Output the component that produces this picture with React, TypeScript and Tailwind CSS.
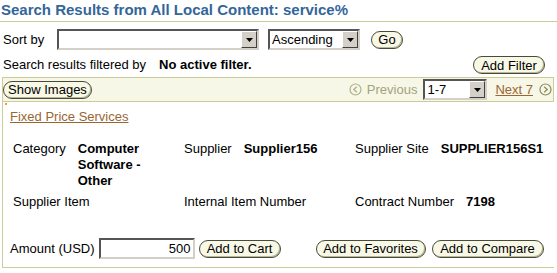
import React from "react";

function Btn({ children, className = "" }: { children: React.ReactNode; className?: string }) {
  return (
    <button
      className={`h-[18px] rounded-[9px] border border-[#4a4a3a] bg-[#f8f8e6] text-[13px] leading-none text-black shadow-[inset_-1px_-1px_0_#b8b898] flex items-center justify-center ${className}`}
    >
      {children}
    </button>
  );
}

function Select({ value = "", className = "" }: { value?: string; className?: string }) {
  return (
    <div
      className={`h-[21px] flex border-2 border-t-[#555555] border-l-[#555555] border-r-[#d4d0c8] border-b-[#d4d0c8] bg-white ${className}`}
    >
      <div className="flex-1 pl-[2px] leading-[17px] overflow-hidden whitespace-nowrap">{value}</div>
      <div className="w-[16px] h-[17px] bg-[#d4d0c8] border border-t-white border-l-white border-r-[#404040] border-b-[#404040] flex items-center justify-center">
        <svg width="7" height="4" viewBox="0 0 7 4">
          <path d="M0 0h7L3.5 4z" fill="#000" />
        </svg>
      </div>
    </div>
  );
}

function NavIcon({ dir, color }: { dir: "prev" | "next"; color: string }) {
  return (
    <svg width="13" height="13" viewBox="0 0 13 13">
      <circle cx="6.5" cy="6.5" r="5.5" fill="none" stroke={color} strokeWidth="1.2" />
      <path
        d={dir === "prev" ? "M7.8 3.8L4.8 6.5l3 2.7" : "M5.2 3.8l3 2.7-3 2.7"}
        fill="none"
        stroke={color}
        strokeWidth="1.3"
      />
    </svg>
  );
}

function Field({ label, value }: { label: string; value?: string }) {
  return (
    <div className="w-[171px] flex items-start">
      <span className="shrink-0">{label}</span>
      {value && <span className="ml-[12px] pr-[6px] font-bold">{value}</span>}
    </div>
  );
}

export default function App() {
  return (
    <div className="w-[557px] h-[273px] bg-white text-[13px] leading-[16px] text-black font-['Liberation_Sans',Arial,sans-serif]">
      <div className="h-[22px] border-b border-[#cccc99] pl-[1px] text-[15px] leading-[20px] font-bold text-[#336699]">
        Search Results from All Local Content: service%
      </div>

      <div className="mt-[7px] h-[21px] flex items-center pl-[3px]">
        <span className="w-[54px]">Sort by</span>
        <Select className="w-[202px]" />
        <Select className="w-[92px] ml-[9px]" value="Ascending" />
        <Btn className="ml-[11px] w-[32px]">Go</Btn>
      </div>

      <div className="mt-[6px] h-[18px] flex items-center pl-[3px]">
        <span>Search results filtered by</span>
        <span className="ml-[13px] font-bold">No active filter.</span>
        <Btn className="ml-auto mr-[12px] w-[72px]">Add Filter</Btn>
      </div>

      <div className="mt-[3px] ml-[2px] mr-[3px] h-[25px] border border-[#cccc99] bg-[#f7f7e7] flex items-center">
        <Btn className="w-[89px]">Show Images</Btn>
        <div className="ml-auto flex items-center">
          <NavIcon dir="prev" color="#b0b088" />
          <span className="ml-[5px] text-[#a3a37f]">Previous</span>
          <Select className="ml-[6px] w-[64px]" value="1-7" />
          <span className="ml-[8px] text-[#996633] underline">Next 7</span>
          <span className="ml-[6px] mr-[1px]">
            <NavIcon dir="next" color="#8c8c60" />
          </span>
        </div>
      </div>

      <div className="relative ml-[2px] mr-[3px] h-[166px] border-l border-b border-[#cccc99] pl-[7px] pt-[7px]">
        <span className="absolute left-[2px] top-[1px] w-[2px] h-[2px] bg-[#ff9933]" />
        <div>
          <span className="text-[#996633] underline">Fixed Price Services</span>
        </div>

        <div className="mt-[16px] pl-[3px] flex">
          <Field label="Category" value="Computer Software - Other" />
          <Field label="Supplier" value="Supplier156" />
          <Field label="Supplier Site" value="SUPPLIER156S1" />
        </div>

        <div className="mt-[5px] pl-[3px] flex">
          <Field label="Supplier Item" />
          <Field label="Internal Item Number" />
          <Field label="Contract Number" value="7198" />
        </div>

        <div className="mt-[28px] flex items-center">
          <span>Amount (USD)</span>
          <div className="ml-[4px] w-[96px] h-[21px] border-2 border-t-[#555555] border-l-[#555555] border-r-[#d4d0c8] border-b-[#d4d0c8] bg-white text-right pr-[2px] leading-[17px]">
            500
          </div>
          <Btn className="ml-[4px] w-[82px]">Add to Cart</Btn>
          <Btn className="ml-[35px] w-[110px]">Add to Favorites</Btn>
          <Btn className="ml-[6px] w-[112px]">Add to Compare</Btn>
        </div>
      </div>
    </div>
  );
}
